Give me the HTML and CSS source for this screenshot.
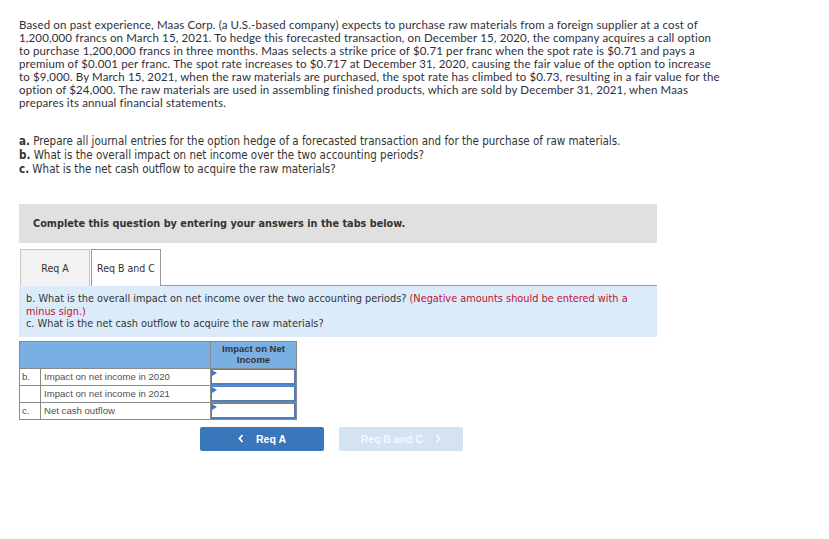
FILE: index.html
```html
<!DOCTYPE html>
<html>
<head>
<meta charset="utf-8">
<link rel="stylesheet" href="styles.css">
</head>
<body>
<div class="page">
  <p class="intro">Based on past experience, Maas Corp. (a U.S.-based company) expects to purchase raw materials from a foreign supplier at a cost of<br>1,200,000 francs on March 15, 2021. To hedge this forecasted transaction, on December 15, 2020, the company acquires a call option<br>to purchase 1,200,000 francs in three months. Maas selects a strike price of $0.71 per franc when the spot rate is $0.71 and pays a<br>premium of $0.001 per franc. The spot rate increases to $0.717 at December 31, 2020, causing the fair value of the option to increase<br>to $9,000. By March 15, 2021, when the raw materials are purchased, the spot rate has climbed to $0.73, resulting in a fair value for the<br>option of $24,000. The raw materials are used in assembling finished products, which are sold by December 31, 2021, when Maas<br>prepares its annual financial statements.</p>

  <ul class="questions">
    <li><b>a.</b> Prepare all journal entries for the option hedge of a forecasted transaction and for the purchase of raw materials.</li>
    <li><b>b.</b> What is the overall impact on net income over the two accounting periods?</li>
    <li><b>c.</b> What is the net cash outflow to acquire the raw materials?</li>
  </ul>

  <div class="notice">Complete this question by entering your answers in the tabs below.</div>

  <div class="tabs">
    <div class="tab">Req A</div>
    <div class="tab active">Req B and C</div>
    <div class="tab-fill"></div>
  </div>

  <div class="panel">
    b. What is the overall impact on net income over the two accounting periods? <span class="warn">(Negative amounts should be entered with a<br>minus sign.)</span><br>
    c. What is the net cash outflow to acquire the raw materials?
  </div>

  <table class="grid">
    <tr class="head">
      <th class="blank" colspan="2"></th>
      <th class="colhead">Impact on Net<br>Income</th>
    </tr>
    <tr>
      <td class="key">b.</td>
      <td class="label">Impact on net income in 2020</td>
      <td class="entry"><div class="input"></div></td>
    </tr>
    <tr>
      <td class="key"></td>
      <td class="label">Impact on net income in 2021</td>
      <td class="entry"><div class="input"></div></td>
    </tr>
    <tr>
      <td class="key">c.</td>
      <td class="label">Net cash outflow</td>
      <td class="entry"><div class="input"></div></td>
    </tr>
  </table>

  <div class="nav">
    <div class="btn prev"><svg class="chev" width="6" height="9" viewBox="0 0 6 9"><polyline points="4.5,1 1.5,4.5 4.5,8" fill="none" stroke="#fff" stroke-width="1.8"/></svg><span>Req A</span></div>
    <div class="btn next"><span>Req B and C</span><svg class="chev" width="6" height="9" viewBox="0 0 6 9"><polyline points="1.5,1 4.5,4.5 1.5,8" fill="none" stroke="#f4f7fb" stroke-width="1.8"/></svg></div>
  </div>
</div>
</body>
</html>
```

FILE: styles.css
```css
html, body {
  margin: 0;
  padding: 0;
  background: #fff;
}

.page {
  padding: 18px 0 0 19px;
  width: 638px;
}

.intro {
  margin: 0;
  font-family: "Lato", "Open Sans", sans-serif;
  font-size: 11.5px;
  line-height: 13px;
  color: #2f2f3a;
  white-space: nowrap;
  letter-spacing: 0.14px;
}

.questions {
  list-style: none;
  margin: 25px 0 0 0;
  padding: 0;
  font-family: "DejaVu Sans Condensed", "DejaVu Sans", sans-serif;
  font-size: 11.5px;
  line-height: 14px;
  color: #333;
  white-space: nowrap;
}

.notice {
  margin-top: 28px;
  height: 39px;
  background: #e0e0e0;
  box-sizing: border-box;
  padding: 0 0 0 14px;
  display: flex;
  align-items: center;
  font-family: "DejaVu Sans Condensed", "DejaVu Sans", sans-serif;
  font-weight: bold;
  font-size: 10.8px;
  color: #333;
}

.tabs {
  margin-top: 6px;
  display: flex;
  align-items: flex-end;
  height: 37px;
}

.tab {
  width: 70px;
  height: 37px;
  box-sizing: border-box;
  display: flex;
  align-items: center;
  justify-content: center;
  font-family: "DejaVu Sans Condensed", "DejaVu Sans", sans-serif;
  font-size: 10.5px;
  color: #333;
  background: #f2f2f2;
  border: 1px solid #c6c6c6;
  border-bottom: none;
  margin-left: 1px;
  margin-right: 1px;
}

.tab.active {
  background: #fff;
  border-color: #9a9a9a;
  margin-left: 0;
  margin-right: 0;
}

.tab-fill {
  flex: 1;
  border-bottom: 1px solid #9a9a9a;
}

.panel {
  background: #dbebf9;
  padding: 7px 7px 6px 7px;
  font-family: "DejaVu Sans Condensed", "DejaVu Sans", sans-serif;
  font-size: 10.85px;
  line-height: 12.5px;
  color: #333;
  white-space: nowrap;
}

.warn {
  color: #c8102e;
}

.grid {
  margin-top: 4px;
  border-collapse: collapse;
  width: 278px;
  font-family: "Liberation Sans", Arial, sans-serif;
  font-size: 9.6px;
  color: #505050;
}

.grid td, .grid th {
  border: 1px solid #8a8a8a;
  padding: 0;
}

.head th {
  background: #7aafe3;
  height: 25px;
}

.colhead {
  width: 85px;
  font-weight: bold;
  font-size: 9.5px;
  line-height: 11px;
  color: #333;
  text-align: center;
  vertical-align: top;
  padding-top: 1px !important;
}

.grid tr:not(.head) td {
  height: 16px;
  line-height: 14px;
}

.key {
  width: 18px;
  padding-left: 2px !important;
}

.label {
  padding-left: 3px !important;
}

.input {
  height: 13px;
  border-style: solid;
  border-color: #4a7fc4;
  border-width: 1px 2px 2px 1px;
  background: #fff;
  position: relative;
}

.input::before {
  content: "";
  position: absolute;
  left: 0;
  top: 0;
  border-top: 3px solid transparent;
  border-bottom: 3px solid transparent;
  border-left: 5px solid #3f7ac6;
}

.nav {
  display: flex;
  gap: 15px;
  margin: 7px 0 0 181px;
}

.btn {
  width: 124px;
  height: 24px;
  border-radius: 2px;
  display: flex;
  align-items: center;
  justify-content: center;
  gap: 12px;
  font-family: "Liberation Sans", Arial, sans-serif;
  font-weight: bold;
  font-size: 10.5px;
}

.btn.prev {
  background: #3a76ba;
  color: #fff;
}

.btn.next {
  background: #d5e2f1;
  color: #f4f7fb;
}

.chev {
  display: block;
}
```
